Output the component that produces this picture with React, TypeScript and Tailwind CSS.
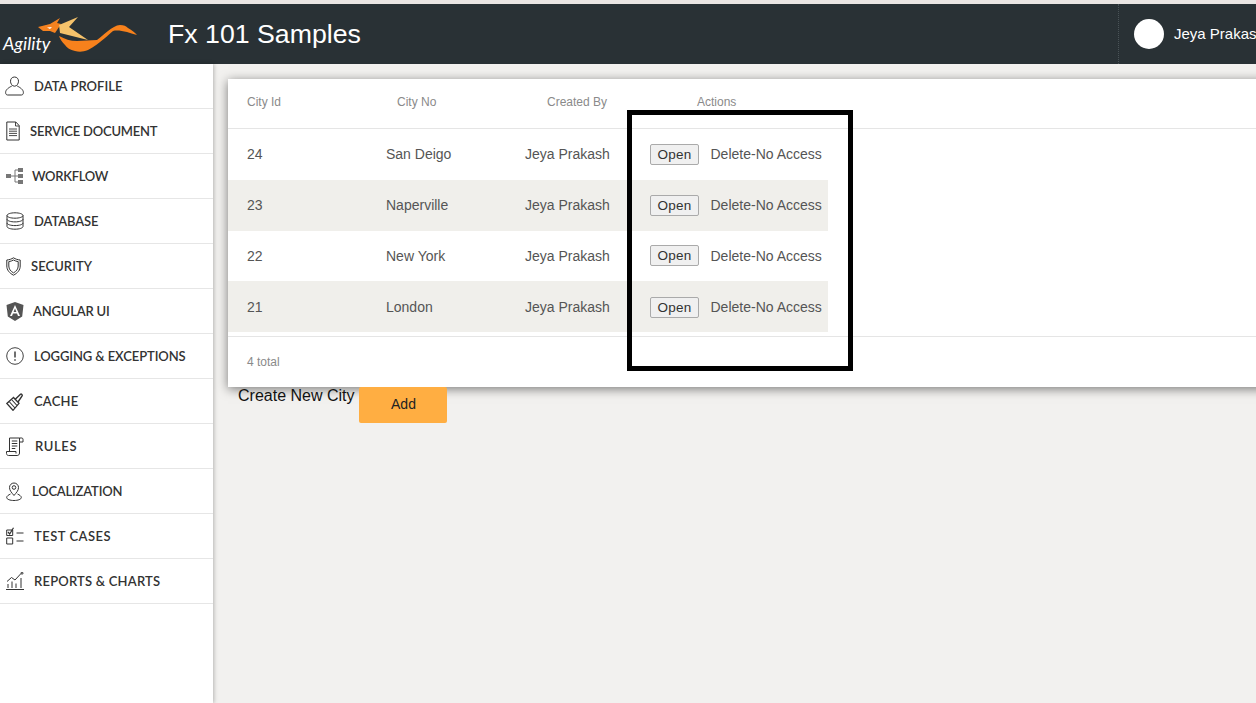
import React from "react";

const Ic = ({ children, w = 22, h = 22, vb = "0 0 22 22" }: { children: React.ReactNode; w?: number; h?: number; vb?: string }) => (
  <svg width={w} height={h} viewBox={vb} fill="none" stroke="#333" strokeWidth="1" className="shrink-0">{children}</svg>
);

const items: { label: string; pl: string; gap: string; tr: string; icon: React.ReactNode }[] = [
  { label: "DATA PROFILE", pl: "pl-[5px]", gap: "gap-[10px]", tr: "tracking-[0.05px]", icon: <Ic w={19} h={20} vb="0 0 19 20"><path d="M9.500 1c2.600 0 4 2 4 4.200 0 2.300-1.500 5-4 5s-4-2.700-4-5C5.500 3 6.900 1 9.500 1Z" /><path d="M6.800 10C4 11.500.6 13.500.6 16.500c0 1.500.8 2.500 2 2.500h13.800c1.200 0 2-1 2-2.500 0-3-3.400-5-6.200-6.500" /></Ic> },
  { label: "SERVICE DOCUMENT", pl: "pl-[6px]", gap: "gap-[10px]", tr: "tracking-[-0.2px]", icon: <Ic w={14} h={20} vb="0 0 14 20"><path d="M.8 1h9l3.400 3.600V19H.8Z" /><path d="M9.500 1v4h3.700M3 8h8M3 10.200h8M3 12.400h8M3 14.600h8" strokeWidth=".9" /></Ic> },
  { label: "WORKFLOW", pl: "pl-[6px]", gap: "gap-[6px]", tr: "tracking-[-0.3px]", icon: <Ic w={20} h={18} vb="0 0 20 18"><g fill="#777" stroke="none"><rect x="0" y="7" width="5" height="4" /><rect x="12" y="1" width="5" height="4" /><rect x="12" y="7" width="5" height="4" /><rect x="12" y="13" width="5" height="4" /></g><path d="M5 9h7M9 3h3M9 15h3M9 3v12" stroke="#777" /></Ic> },
  { label: "DATABASE", pl: "pl-[6px]", gap: "gap-[10px]", tr: "tracking-[-0.1px]", icon: <Ic w={18} h={18} vb="0 0 18 18"><path d="M1 3.500C1 2 4.600.8 9 .8s8 1.200 8 2.700-3.600 2.700-8 2.700-8-1.200-8-2.700Zm0 0v11c0 1.500 3.600 2.700 8 2.700s8-1.200 8-2.700v-11M1 7.200c0 1.500 3.600 2.700 8 2.700s8-1.200 8-2.700M1 10.900c0 1.500 3.600 2.700 8 2.700s8-1.200 8-2.700" /></Ic> },
  { label: "SECURITY", pl: "pl-[6px]", gap: "gap-[10px]", tr: "tracking-[0.05px]", icon: <Ic w={15} h={19} vb="0 0 15 19"><path d="M7.500.8c2 1.300 4.200 2 6.700 2.200v6c0 4-2.500 7-6.700 9.200C3.300 16 .8 13 .8 9V3C3.300 2.800 5.500 2.100 7.500.8Z" /><path d="M7.500 3c1.300.8 3 1.400 4.700 1.600V9c0 3-1.800 5.200-4.700 6.900C4.600 14.200 2.800 12 2.800 9V4.600C4.500 4.400 6.200 3.800 7.500 3Z" /></Ic> },
  { label: "ANGULAR UI", pl: "pl-[6px]", gap: "gap-[9px]", tr: "tracking-[-0.2px]", icon: <Ic w={18} h={19} vb="0 0 18 19"><path fillRule="evenodd" fill="#555" stroke="none" d="M9 0 17.500 3 16.200 14.500 9 19 1.800 14.500.5 3ZM9 3 4 14h2l1-2.500h4l1 2.500h2ZM9 6.500 10.400 10H7.600Z" /></Ic> },
  { label: "LOGGING & EXCEPTIONS", pl: "pl-[6px]", gap: "gap-[10px]", tr: "tracking-[-0.1px]", icon: <Ic w={18} h={18} vb="0 0 18 18"><circle cx="9" cy="9" r="8.300" stroke="#444" /><path d="M9 4.500v6M9 12.300v1.500" strokeWidth="1.400" /></Ic> },
  { label: "CACHE", pl: "pl-[6px]", gap: "gap-[10px]", tr: "tracking-[0.2px]", icon: <Ic w={18} h={19} vb="0 0 18 19"><path d="M7.500 5.500.8 11.500l6.200 6.800 6-7Z" strokeWidth="1.300" /><path d="m3.500 10 5.500 6M6 8l5 5.500" strokeWidth="1.100" /><path d="m9 7.500 5.500-5.300c.8-.7 2.300.7 1.600 1.600L12 10" strokeWidth="1.400" /></Ic> },
  { label: "RULES", pl: "pl-[6px]", gap: "gap-[11px]", tr: "tracking-[0.6px]", icon: <Ic w={18} h={19} vb="0 0 18 19"><path d="M3.500 14.500V1h10v15c0 1.500-1 2.500-2.300 2.500H2.500C1.300 18.500.5 17.500.5 16.500v-2h9.500v2" /><path d="M13.500 1h2.300c.8 0 1.200.6 1.200 1.300V5h-3.500M5.800 4h5.500M5.800 6.500h5.500M5.800 9h5.500M5.800 11.500h3.500" /></Ic> },
  { label: "LOCALIZATION", pl: "pl-[6px]", gap: "gap-[10px]", tr: "tracking-[-0.2px]", icon: <Ic w={16} h={19} vb="0 0 16 19"><path d="M8 13.500C5.500 10.500 3.500 8.500 3.500 5.500a4.500 4.500 0 0 1 9 0c0 3-2 5-4.500 8Z" /><circle cx="8" cy="5.500" r="1.800" /><path d="M4.500 12C2.500 13 .7 14 .7 15.500c0 1.800 3.300 3 7.300 3s7.300-1.200 7.300-3c0-1.500-1.800-2.500-3.800-3.500" /></Ic> },
  { label: "TEST CASES", pl: "pl-[6px]", gap: "gap-[10px]", tr: "tracking-[0.5px]", icon: <Ic w={18} h={18} vb="0 0 18 18"><path d="M.7 3h6v5.500h-6ZM.7 11h6v6h-6Z" /><path d="m2 5 1.700 2L7.500.8M10.500 6h7M10.500 14h7" strokeWidth="1.200" /></Ic> },
  { label: "REPORTS & CHARTS", pl: "pl-[6px]", gap: "gap-[10px]", tr: "tracking-[0.2px]", icon: <Ic w={18} h={18} vb="0 0 18 18"><path d="M0 17.500h18M2 16v-4M6 16V9.500M10 16v-4.500M15 16V6" /><path d="M1 9.500 5.500 5.500 9 8l6-6.500" /><circle cx="16" cy="1.200" r="1" /></Ic> },
];

const rows = [
  { id: "24", city: "San Deigo", cls: "h-[51px] bg-white", btn: "" },
  { id: "23", city: "Naperville", cls: "h-[51px] bg-[#f0efeb]", btn: "" },
  { id: "22", city: "New York", cls: "h-[50px] bg-white", btn: "mb-[2px]" },
  { id: "21", city: "London", cls: "h-[51px] pt-[1px] bg-[#f0efeb]", btn: "" },
];

function Logo() {
  return (
    <div className="relative h-[60px] w-[140px] shrink-0">
      <svg width="140" height="60" viewBox="0 0 140 60" className="absolute left-0 top-0">
        <path d="M38 23 50 20 60 14 57 19 61 20 55 29 50 27 43 27Z" fill="#f58220" />
        <path d="M47 23.500 52 23 50 25Z" fill="#fff" />
        <path d="M59 21 78 13 69 23 88 36 60 29Z" fill="#f5c26b" />
        <path d="M59 32C65 35 70 37 77 37L97 36C101 33 104 30 108 27 112 24 116 21 120 21 124 21 126 22 128 24 132 26 135 29 137 31 133 30 130 29 127 28 122 27 117 26 113 27 110 29 108 32 105 34 99 39 94 43 88 46 83 48 79 48 75 47 70 46 67 44 65 41 62 38 60 35 59 32Z" fill="#f7811c" />
      </svg>
      <span className="absolute left-[3px] top-[26px] text-[18px] italic text-white font-['Lato',sans-serif]">Agility</span>
    </div>
  );
}

export default function App() {
  return (
    <div className="relative flex h-[703px] w-[1256px] flex-col overflow-hidden bg-[#f2f1ef] font-['Liberation_Sans',sans-serif]">
      <div className="h-[4px] shrink-0 bg-[#e9e5e3]" />
      <header className="flex h-[60px] shrink-0 items-center bg-[#293135] text-white">
        <Logo />
        <h1 className="ml-[28px] text-[26.7px] leading-none">Fx 101 Samples</h1>
        <div className="ml-auto flex h-full w-[138px] shrink-0 items-center overflow-hidden whitespace-nowrap border-l border-dotted border-[#4a5357] pl-[15px]">
          <div className="h-[30px] w-[30px] shrink-0 rounded-full bg-white" />
          <span className="ml-[10px] text-[15px]">Jeya Prakash</span>
        </div>
      </header>
      <div className="flex min-h-0 flex-1">
        <nav className="w-[213px] shrink-0 bg-white shadow-[1px_0_4px_rgba(0,0,0,0.25)] font-['Lato',sans-serif]">
          {items.map((it) => (
            <div key={it.label} className={`flex h-[45px] items-center border-b border-[#e6e6e6] text-[13px] font-semibold text-[#333] ${it.pl} ${it.gap}`}>
              {it.icon}
              <span className={`pt-[2px] ${it.tr}`}>{it.label}</span>
            </div>
          ))}
        </nav>
        <main className="min-w-0 flex-1 pl-[15px] pt-[15px]">
          <section className="h-[308px] w-[1100px] bg-white shadow-[0_2px_10px_rgba(0,0,0,0.5)]">
            <div className="flex h-[50px] items-center border-b border-[#e5e5e5] pb-[4px] pl-[19px] text-[12px] text-[#8a8a8a]">
              <span className="w-[150px]">City Id</span>
              <span className="w-[150px]">City No</span>
              <span className="w-[150px]">Created By</span>
              <span>Actions</span>
            </div>
            <div className="w-[600px]">
              {rows.map((r) => (
                <div key={r.id} className={`flex items-center pl-[19px] text-[14px] text-[#555] ${r.cls}`}>
                  <span className="w-[139px]">{r.id}</span>
                  <span className="w-[139px]">{r.city}</span>
                  <span className="w-[125px] whitespace-nowrap">Jeya Prakash</span>
                  <button className={`h-[21px] w-[49px] rounded-[2px] border border-[#aaa] bg-[#f0f0f0] text-[13.5px] tracking-[0.2px] text-[#333] ${r.btn}`}>Open</button>
                  <span className="ml-[11.5px] whitespace-nowrap">Delete-No Access</span>
                </div>
              ))}
            </div>
            <div className="mt-[4px] flex h-[51px] items-center border-t border-[#e5e5e5] pl-[19px] text-[12px] text-[#8a8a8a]">4 total</div>
          </section>
          <div className="flex items-start">
            <span className="ml-[10px] text-[16px] leading-[18px] text-[#111]">Create New City</span>
            <button className="ml-[5px] h-[36px] w-[88px] rounded-[2px] bg-[#ffae42] pb-[2px] text-[14px] font-medium text-[#222]">Add</button>
          </div>
        </main>
      </div>
      <div className="absolute left-[627px] top-[110px] h-[261px] w-[226px] border-[5px] border-black" />
    </div>
  );
}
